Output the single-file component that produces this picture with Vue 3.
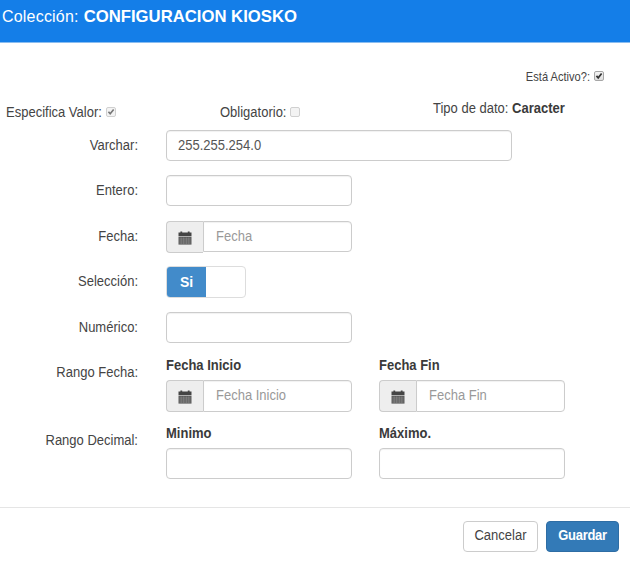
<script setup>
import { ref, h } from 'vue'

const active = ref(true)
const yes = ref(true)

const CalendarIcon = () =>
  h('svg', { width: 14, height: 14, viewBox: '0 0 14 14', 'aria-hidden': 'true' }, [
    h('path', { fill: '#444', d: 'M.5 1.6h1.9V.6h1.8v1h5.6v-1h1.8v1h1.9v3.6H.5z' }),
    h('path', { fill: '#5c5c5c', d: 'M.5 5.8h13v7.8H.5z' }),
    h('path', {
      stroke: '#a0a0a0',
      'stroke-width': 0.4,
      fill: 'none',
      d: 'M1.3 8h11.4M1.3 10h11.4M1.3 12h11.4M3.2 6.4v6.6M5.7 6.4v6.6M8.3 6.4v6.6M10.8 6.4v6.6',
    }),
  ])
</script>

<template>
  <div class="dialog">
    <header class="head"><span class="lead">Colección:</span><strong>CONFIGURACION KIOSKO</strong></header>

    <main class="body">
      <div class="active-line">
        <span class="t small">Está Activo?:</span>
        <span class="box on" role="checkbox" :aria-checked="active" @click="active = !active">
          <svg v-if="active" viewBox="0 0 10 10"><path d="M1.8 4.8 4 7.3 8.3 1.9" /></svg>
        </span>
      </div>

      <div class="flags">
        <div class="flag first">
          <span class="t">Especifica Valor:</span>
          <span class="box off"><svg viewBox="0 0 10 10"><path d="M1.8 4.8 4 7.3 8.3 1.9" /></svg></span>
        </div>
        <div class="flag second"><span class="t">Obligatorio:</span><span class="box off"></span></div>
        <div class="kind"><span class="t">Tipo de dato: <b>Caracter</b></span></div>
      </div>

      <div class="row">
        <label class="t">Varchar:</label>
        <div class="field wide"><span class="t">255.255.254.0</span></div>
      </div>
      <div class="row">
        <label class="t">Entero:</label>
        <div class="field"></div>
      </div>
      <div class="row">
        <label class="t">Fecha:</label>
        <div class="group"><i><CalendarIcon /></i><div class="field short"><span class="t">Fecha</span></div></div>
      </div>
      <div class="row">
        <label class="t">Selección:</label>
        <div class="switch" @click="yes = !yes"><b><span class="t">Si</span></b></div>
      </div>
      <div class="row">
        <label class="t">Numérico:</label>
        <div class="field"></div>
      </div>

      <div class="row range">
        <label class="t">Rango Fecha:</label>
        <div class="pair">
          <div class="col">
            <b class="t">Fecha Inicio</b>
            <div class="group"><i><CalendarIcon /></i><div class="field tall"><span class="t">Fecha Inicio</span></div></div>
          </div>
          <div class="col">
            <b class="t">Fecha Fin</b>
            <div class="group"><i><CalendarIcon /></i><div class="field tall"><span class="t">Fecha Fin</span></div></div>
          </div>
        </div>
      </div>
      <div class="row range">
        <label class="t">Rango Decimal:</label>
        <div class="pair">
          <div class="col"><b class="t">Minimo</b><div class="field"></div></div>
          <div class="col"><b class="t">Máximo.</b><div class="field"></div></div>
        </div>
      </div>
    </main>

    <footer class="foot">
      <button class="btn cancel"><span class="t">Cancelar</span></button>
      <button class="btn save"><span class="t">Guardar</span></button>
    </footer>
  </div>
</template>

<style>
body {
  background: #fff;
}
</style>

<style scoped>
.dialog,
.dialog * {
  box-sizing: border-box;
}
.dialog {
  width: 630px;
  height: 561px;
  overflow: hidden;
  display: flex;
  flex-direction: column;
  background: #fff;
  color: #444;
  font: 13px/20px "Liberation Sans", Arial, sans-serif;
}
.t {
  display: inline-block;
  white-space: nowrap;
  transform: translateY(0.3px) scaleY(1.07);
}
b {
  color: #3a3a3a;
}
.head {
  height: 43px;
  flex: none;
  padding: 7px 0 0 2px;
  display: flex;
  gap: 5px;
  background: #147ee8;
  border-bottom: 1px solid #8abdf0;
  color: #fff;
  font-size: 16px;
}
.lead {
  letter-spacing: 0.2px;
}
.head strong {
  font-size: 16.7px;
}
.body {
  height: 465px;
  flex: none;
  border-bottom: 1px solid #e5e5e5;
}
.active-line {
  height: 54px;
  padding: 24px 26px 0 0;
  display: flex;
  justify-content: flex-end;
  gap: 4px;
}
.small {
  font-size: 11.1px;
}
.box {
  width: 10px;
  height: 10px;
  flex: none;
  border: 1px solid #a6a6a6;
  border-radius: 2px;
  background: linear-gradient(#f4f4f4, #dedede);
  display: flex;
}
.box svg {
  width: 100%;
  height: 100%;
  overflow: visible;
}
.box path {
  fill: none;
  stroke: #333;
  stroke-width: 2.1;
}
.box.on {
  margin-top: 4px;
}
.box.off {
  border-color: #d0d0d0;
  background: #f3f3f3;
  margin-top: 4px;
}
.box.off path {
  stroke: #777;
  stroke-width: 2;
}
.flags {
  height: 33px;
  display: flex;
}
.flag {
  display: flex;
  gap: 4px;
  padding-top: 6px;
}
.first {
  width: 214px;
  padding-left: 6px;
}
.second {
  width: 213px;
  padding-left: 6px;
}
.kind {
  padding: 1px 0 0 6px;
}
.row {
  height: 45.4px;
  display: grid;
  grid-template-columns: 138px 1fr;
  column-gap: 28px;
  align-items: start;
}
.row > label {
  justify-self: end;
  margin-top: 5px;
}
.field {
  width: 186px;
  height: 31px;
  border: 1px solid #ccc;
  border-radius: 4px;
  padding: 4px 11px;
  background: #fff;
  box-shadow: inset 0 1px 1px rgba(0, 0, 0, 0.06);
  color: #555;
}
.field.wide {
  width: 346px;
}
.field.tall {
  height: 32px;
}
.group {
  display: flex;
  width: 186px;
}
.group i {
  width: 37px;
  height: 32px;
  flex: none;
  display: flex;
  align-items: center;
  justify-content: center;
  padding-top: 2px;
  background: #eee;
  border: 1px solid #ccc;
  border-right: 0;
  border-radius: 4px 0 0 4px;
}
.group .field {
  width: 149px;
  padding-left: 12px;
  border-radius: 0 4px 4px 0;
  color: #999;
}
.switch {
  width: 80px;
  height: 32px;
  border: 1px solid #ddd;
  border-radius: 4px;
  overflow: hidden;
}
.switch b {
  display: flex;
  justify-content: center;
  width: 39px;
  height: 100%;
  padding-top: 5px;
  background: #428bca;
  color: #fff;
  font-size: 14px;
}
.range {
  height: 68px;
}
.pair {
  display: flex;
  gap: 27px;
  margin-top: -2px;
}
.col {
  display: flex;
  flex-direction: column;
  align-items: flex-start;
  gap: 5px;
}
.foot {
  display: flex;
  justify-content: flex-end;
  gap: 8px;
  padding: 13px 11px 0 0;
}
.btn {
  height: 31px;
  padding: 4px 0 0;
  display: flex;
  justify-content: center;
  border-radius: 4px;
  font: inherit;
}
.cancel {
  width: 75px;
  background: #fff;
  border: 1px solid #ccc;
  color: #444;
}
.save {
  width: 73px;
  background: #337ab7;
  border: 1px solid #2e6da4;
  color: #fff;
  font-weight: bold;
  letter-spacing: -0.3px;
}
</style>
